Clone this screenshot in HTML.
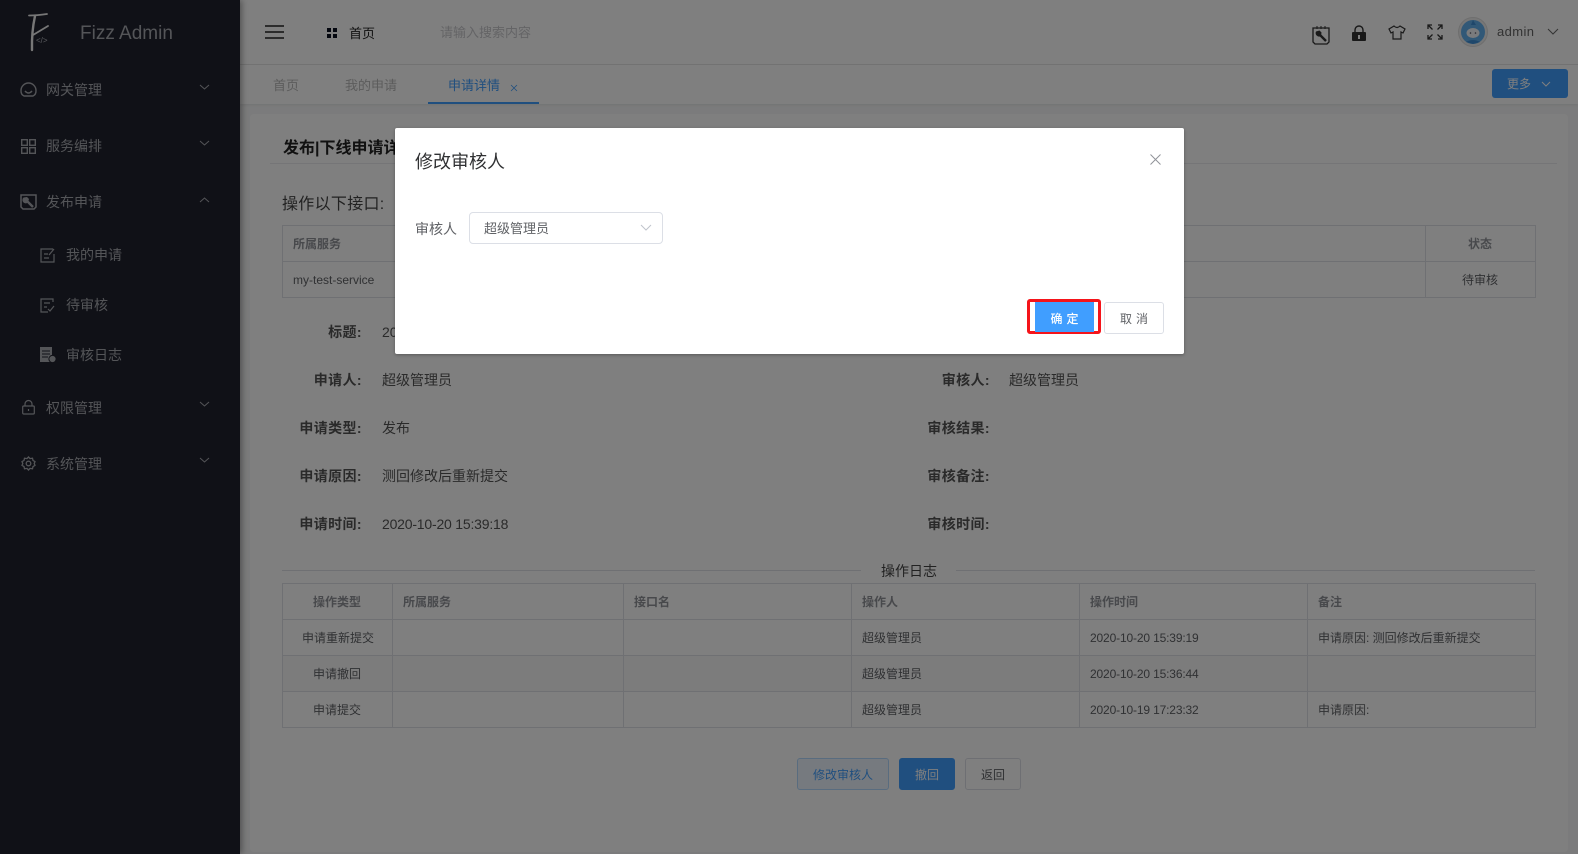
<!DOCTYPE html>
<html lang="zh"><head><meta charset="utf-8"><title>申请详情</title>
<style>
*{box-sizing:border-box}
html,body{margin:0;padding:0;width:1578px;height:854px;overflow:hidden;background:#f6f7f8}
body{font-family:"Liberation Sans","Noto Sans CJK SC",sans-serif;font-size:14px;color:#303133;position:relative}
.a{position:absolute;white-space:nowrap;line-height:20px}
.box{position:absolute}
.side{position:absolute;left:0;top:0;width:240px;height:854px;background:#20222e;box-shadow:2px 0 6px rgba(0,0,0,.35)}
.m{position:absolute;color:#a8aab0;line-height:20px;white-space:nowrap}
svg{position:absolute;overflow:visible}
.b{font-weight:700;color:#4a4c52}
.l{position:absolute;background:#dfe1e6}
.th{font-size:12px;font-weight:700;color:#909399}
.td{font-size:12px;color:#606266}
.lab{position:absolute;width:120px;text-align:right;left:242px;font-weight:700;color:#555;line-height:20px;white-space:nowrap;letter-spacing:.4px}
.lab.r{left:870px}
.btn{position:absolute;border-radius:3px;text-align:center;font-size:12px;line-height:32px;height:32px;border:1px solid #dcdfe6}
#ov{position:absolute;left:0;top:0;width:1578px;height:854px;background:rgba(0,0,0,.5)}
#modal{position:absolute;left:395px;top:128px;width:789px;height:226px;background:#fff;border-radius:2px;box-shadow:0 1px 3px rgba(0,0,0,.3)}
</style></head><body>

<div class="box" style="left:240px;top:0;width:1338px;height:65px;background:#fff;border-bottom:1px solid #e6e6e6"></div>
<div class="box" style="left:240px;top:65px;width:1338px;height:39px;background:#fff;box-shadow:0 1px 3px rgba(0,0,0,.08)"></div>
<div class="box" style="left:250px;top:114px;width:1318px;height:738px;background:#fff;border-radius:4px"></div>

<svg style="left:265px;top:25px" width="20" height="14" fill="none" stroke="#222" stroke-width="1.4"><path d="M0 1H19M0 7H19M0 13H19"/></svg>
<svg style="left:327px;top:28px" width="10" height="10" fill="#0a1020"><rect width="4" height="4"/><rect x="6" width="4" height="4"/><rect y="6" width="4" height="4"/><rect x="6" y="6" width="4" height="4"/></svg>
<div class="a" style="left:349px;top:24px;font-size:13px;color:#222">首页</div>
<div class="a" style="left:440px;top:23px;font-size:13px;color:#c8c8cc">请输入搜索内容</div>

<svg style="left:1311px;top:25px" width="20" height="20" fill="none" stroke="#333" stroke-width="1.3"><path d="M2 3H18V17L16 19H4L2 17Z"/><path d="M6 1V4M10 1V4M14 1V4" stroke-width="1"/><path d="M8 9L15 16" stroke-width="2.4"/><path d="M5 6.500A3.500 3.500 0 0 0 10 11L10.500 7.500L8.500 5.500Z" fill="#333" stroke="none"/></svg>
<svg style="left:1351px;top:25px" width="16" height="16"><path d="M4 7V5A4 4 0 0 1 12 5V7" fill="none" stroke="#333" stroke-width="1.4"/><rect x="1" y="7" width="14" height="9" rx="1" fill="#333"/><rect x="7" y="10" width="2" height="4" fill="#fff"/></svg>
<svg style="left:1388px;top:25px" width="18" height="15" fill="none" stroke="#333" stroke-width="1.2"><path d="M6 1L1 4L3 8L5 7V14H13V7L15 8L17 4L12 1Q9 4 6 1Z"/></svg>
<svg style="left:1427px;top:24px" width="16" height="16" fill="none" stroke="#333" stroke-width="1.3"><path d="M1 5V1H5M1 1L5.500 5.500M11 1H15V5M15 1L10.500 5.500M1 11V15H5M1 15L5.500 10.500M11 15H15V11M15 15L10.500 10.500"/></svg>
<svg style="left:1458px;top:17px" width="30" height="30"><circle cx="15" cy="15" r="14.500" fill="#eee" stroke="#ddd"/><circle cx="15" cy="15" r="12" fill="#62b0ee"/><path d="M15 3L13 8H18Z" fill="#3f8fd6"/><ellipse cx="15" cy="16" rx="6.500" ry="5" fill="#f4f7fa"/><circle cx="12.500" cy="16" r=".8" fill="#556"/><circle cx="17.500" cy="16" r=".8" fill="#556"/><path d="M8 25Q15 21 22 25L15 27Z" fill="#3f8fd6"/></svg>
<div class="a" style="left:1497px;top:22px;font-size:13px;color:#666;letter-spacing:.4px">admin</div>
<svg style="left:1547px;top:28px" width="12" height="8" fill="none" stroke="#666"><path d="M1 1L6 6L11 1"/></svg>

<div class="a" style="left:273px;top:76px;font-size:13px;color:#b8b8b8">首页</div>
<div class="a" style="left:345px;top:76px;font-size:13px;color:#b8b8b8">我的申请</div>
<div class="a" style="left:448px;top:76px;font-size:13px;color:#409eff">申请详情</div>
<svg style="left:510px;top:84px" width="8" height="8" fill="none" stroke="#409eff" stroke-width=".8"><path d="M1 1L7 7M7 1L1 7"/></svg>
<div class="box" style="left:428px;top:102px;width:111px;height:2px;background:#409eff"></div>
<div class="box" style="left:1492px;top:69px;width:76px;height:29px;background:#409eff;border-radius:3px"></div>
<div class="a" style="left:1507px;top:74px;font-size:12px;color:#fff">更多</div>
<svg style="left:1541px;top:81px" width="10" height="7" fill="none" stroke="#fff"><path d="M1 1L5 5L9 1"/></svg>

<div class="a" style="left:283px;top:138px;font-size:16px;font-weight:700;color:#222;line-height:22px">发布|下线申请详情</div>
<div class="l" style="left:270px;top:163px;width:1287px;height:1px;background:#ebebee"></div>
<div class="a" style="left:282px;top:194px;font-size:16px;color:#444;line-height:22px;letter-spacing:.3px">操作以下接口:</div>

<div class="box" style="left:282px;top:225px;width:1254px;height:73px;border:1px solid #dfe1e6"></div>
<div class="l" style="left:282px;top:261px;width:1254px;height:1px"></div>
<div class="l" style="left:1425px;top:225px;width:1px;height:73px"></div>
<div class="a th" style="left:293px;top:234px">所属服务</div>
<div class="a td" style="left:293px;top:270px">my-test-service</div>
<div class="a th" style="left:1468px;top:234px">状态</div>
<div class="a td" style="left:1462px;top:270px">待审核</div>

<div class="lab" style="top:322px">标题:</div>
<div class="a" style="left:382px;top:322px;color:#555">2020</div>
<div class="lab" style="top:370px">申请人:</div>
<div class="a" style="left:382px;top:370px;color:#555">超级管理员</div>
<div class="lab" style="top:418px">申请类型:</div>
<div class="a" style="left:382px;top:418px;color:#555">发布</div>
<div class="lab" style="top:466px">申请原因:</div>
<div class="a" style="left:382px;top:466px;color:#555">测回修改后重新提交</div>
<div class="lab" style="top:514px">申请时间:</div>
<div class="a" style="left:382px;top:514px;color:#555;letter-spacing:-.2px">2020-10-20 15:39:18</div>
<div class="lab r" style="top:370px">审核人:</div>
<div class="a" style="left:1009px;top:370px;color:#555">超级管理员</div>
<div class="lab r" style="top:418px">审核结果:</div>
<div class="lab r" style="top:466px">审核备注:</div>
<div class="lab r" style="top:514px">审核时间:</div>

<div class="l" style="left:282px;top:570px;width:579px;height:1px"></div>
<div class="l" style="left:956px;top:570px;width:579px;height:1px"></div>
<div class="a" style="left:881px;top:561px;font-size:14px;color:#444">操作日志</div>

<div class="box" style="left:282px;top:583px;width:1254px;height:145px;border:1px solid #dfe1e6"></div>
<div class="box" style="left:283px;top:656px;width:1252px;height:36px;background:#f8f8f9"></div>
<div class="l" style="left:282px;top:619px;width:1254px;height:1px"></div>
<div class="l" style="left:282px;top:655px;width:1254px;height:1px"></div>
<div class="l" style="left:282px;top:691px;width:1254px;height:1px"></div>
<div class="l" style="left:392px;top:583px;width:1px;height:145px"></div>
<div class="l" style="left:623px;top:583px;width:1px;height:145px"></div>
<div class="l" style="left:851px;top:583px;width:1px;height:145px"></div>
<div class="l" style="left:1079px;top:583px;width:1px;height:145px"></div>
<div class="l" style="left:1307px;top:583px;width:1px;height:145px"></div>

<div class="a th" style="left:313px;top:592px">操作类型</div>
<div class="a th" style="left:403px;top:592px">所属服务</div>
<div class="a th" style="left:634px;top:592px">接口名</div>
<div class="a th" style="left:862px;top:592px">操作人</div>
<div class="a th" style="left:1090px;top:592px">操作时间</div>
<div class="a th" style="left:1318px;top:592px">备注</div>

<div class="a td" style="left:302px;top:628px">申请重新提交</div>
<div class="a td" style="left:862px;top:628px">超级管理员</div>
<div class="a td" style="left:1090px;top:628px;letter-spacing:-.15px">2020-10-20 15:39:19</div>
<div class="a td" style="left:1318px;top:628px">申请原因: 测回修改后重新提交</div>
<div class="a td" style="left:313px;top:664px">申请撤回</div>
<div class="a td" style="left:862px;top:664px">超级管理员</div>
<div class="a td" style="left:1090px;top:664px;letter-spacing:-.15px">2020-10-20 15:36:44</div>
<div class="a td" style="left:313px;top:700px">申请提交</div>
<div class="a td" style="left:862px;top:700px">超级管理员</div>
<div class="a td" style="left:1090px;top:700px;letter-spacing:-.15px">2020-10-19 17:23:32</div>
<div class="a td" style="left:1318px;top:700px">申请原因:</div>

<div class="btn" style="left:797px;top:758px;width:92px;background:#ecf5ff;border-color:#b3d8ff;color:#409eff">修改审核人</div>
<div class="btn" style="left:899px;top:758px;width:56px;background:#409eff;border-color:#409eff;color:#fff">撤回</div>
<div class="btn" style="left:965px;top:758px;width:56px;background:#fff;color:#606266">返回</div>

<div class="side">
<svg style="left:27px;top:12px" width="24" height="40" fill="none" stroke="#eee" stroke-linecap="round"><path d="M2 3.500Q10 3.500 20 2" stroke-width="1.800"/><path d="M8 4Q4.500 20 5 38" stroke-width="2.400"/><path d="M6 23L21 14" stroke-width="1.800"/></svg>
<div class="a" style="left:36px;top:36px;font-size:8px;line-height:9px;color:#b4b6bd">&lt;/&gt;</div>
<div class="a" style="left:80px;top:22px;font-size:19px;line-height:24px;color:#a8aab0">Fizz Admin</div>

<svg style="left:20px;top:82px" width="17" height="16" fill="none" stroke="#a8aab0" stroke-width="1.400"><path d="M4 14Q.8 12.500 1 8.500A7.500 7.500 0 0 1 16 8.500Q16.200 12.500 13 14Z"/><path d="M5 9Q8.500 13 12 9"/></svg>
<div class="m" style="left:46px;top:80px">网关管理</div>
<svg style="left:199px;top:84px" width="11" height="7" fill="none" stroke="#a8aab0"><path d="M1 1L5.500 5L10 1"/></svg>

<svg style="left:21px;top:139px" width="15" height="15" fill="none" stroke="#a8aab0" stroke-width="1.400"><rect x=".7" y=".7" width="5.600" height="5.600"/><rect x="8.700" y=".7" width="5.600" height="5.600"/><rect x=".7" y="8.700" width="5.600" height="5.600"/><rect x="8.700" y="8.700" width="5.600" height="5.600"/></svg>
<div class="m" style="left:46px;top:136px">服务编排</div>
<svg style="left:199px;top:140px" width="11" height="7" fill="none" stroke="#a8aab0"><path d="M1 1L5.500 5L10 1"/></svg>

<svg style="left:20px;top:194px" width="17" height="16" fill="none" stroke="#a8aab0" stroke-width="1.500"><path d="M1 1H16V13L14 15H3L1 13Z"/><path d="M6 6L13 13" stroke-width="2.400"/><path d="M3.500 3.500A3.300 3.300 0 0 0 8 8.500L9 5L7 3Z" fill="#a8aab0" stroke="none"/></svg>
<div class="m" style="left:46px;top:192px">发布申请</div>
<svg style="left:199px;top:196px" width="11" height="7" fill="none" stroke="#a8aab0"><path d="M1 6L5.500 2L10 6"/></svg>

<svg style="left:40px;top:248px" width="15" height="15" fill="none" stroke="#a8aab0" stroke-width="1.200"><path d="M13 1H1V14H14V6M4 6H8M4 10H9M9 7L14 1"/></svg>
<div class="m" style="left:66px;top:245px">我的申请</div>
<svg style="left:40px;top:298px" width="15" height="15" fill="none" stroke="#a8aab0" stroke-width="1.200"><path d="M13 4V1H1V14H8M4 5H10M4 9H7M8 11L10 13L14 8"/></svg>
<div class="m" style="left:66px;top:295px">待审核</div>
<svg style="left:40px;top:347px" width="17" height="16"><path d="M0 0H12V15H0Z" fill="#a8aab0"/><path d="M2 4H10M2 7H10M2 10H8" stroke="#20222e"/><circle cx="12.500" cy="12" r="3.600" fill="#a8aab0" stroke="#20222e"/></svg>
<div class="m" style="left:66px;top:345px">审核日志</div>

<svg style="left:22px;top:400px" width="13" height="15" fill="none" stroke="#a8aab0" stroke-width="1.200"><path d="M3 6V4A3.500 3.500 0 0 1 10 4V6"/><rect x=".7" y="6" width="11.600" height="8" rx="1"/><path d="M6.500 9V11"/></svg>
<div class="m" style="left:46px;top:398px">权限管理</div>
<svg style="left:199px;top:401px" width="11" height="7" fill="none" stroke="#a8aab0"><path d="M1 1L5.500 5L10 1"/></svg>

<svg style="left:21px;top:456px" width="15" height="15" fill="none" stroke="#a8aab0" stroke-width="1.300"><path d="M7.500 1L9 2.600L11.500 2.200L12 4.400L14 5.600L13.200 7.500L14 9.400L12 10.600L11.500 12.800L9 12.400L7.500 14L6 12.400L3.500 12.800L3 10.600L1 9.400L1.800 7.500L1 5.600L3 4.400L3.500 2.200L6 2.600Z"/><circle cx="7.500" cy="7.500" r="2.300"/></svg>
<div class="m" style="left:46px;top:454px">系统管理</div>
<svg style="left:199px;top:457px" width="11" height="7" fill="none" stroke="#a8aab0"><path d="M1 1L5.500 5L10 1"/></svg>
</div>

<div id="ov"></div>

<div id="modal">
<div class="a" style="left:20px;top:22px;font-size:18px;line-height:24px;color:#303133">修改审核人</div>
<svg style="left:755px;top:26px" width="11" height="11" fill="none" stroke="#909399"><path d="M.5 .5L10.500 10.500M10.500 .5L.5 10.500"/></svg>
<div class="a" style="left:20px;top:91px;color:#606266">审核人</div>
<div class="box" style="left:74px;top:84px;width:194px;height:32px;border:1px solid #dcdfe6;border-radius:4px"></div>
<div class="a" style="left:89px;top:91px;font-size:13px;color:#606266">超级管理员</div>
<svg style="left:245px;top:96px" width="12" height="8" fill="none" stroke="#c0c4cc"><path d="M1 1L6 6L11 1"/></svg>
<div class="box" style="left:632px;top:171px;width:74px;height:35px;border:3px solid #f5141a;border-radius:3px;background:#fff"></div>
<div class="box" style="left:640px;top:174px;width:59px;height:30px;background:#409eff;color:#fff;font-size:12px;font-weight:500;line-height:34px;text-align:center;letter-spacing:4px;text-indent:4px">确定</div>
<div class="btn" style="left:709px;top:174px;width:60px;color:#606266;background:#fff;letter-spacing:4px;text-indent:4px">取消</div>
</div>
</body></html>
